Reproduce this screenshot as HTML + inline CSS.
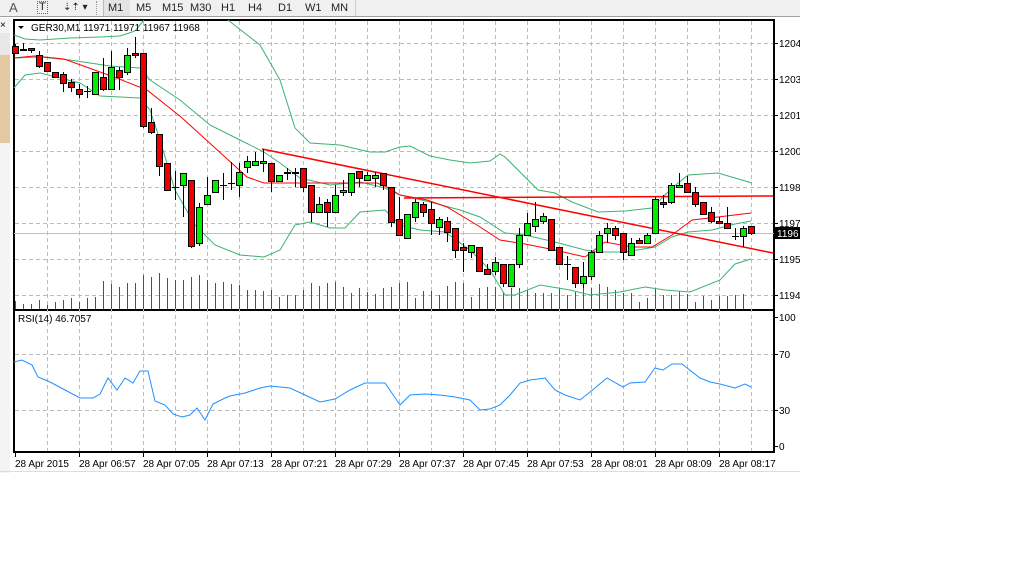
<!DOCTYPE html>
<html><head><meta charset="utf-8"><style>
body{margin:0;width:1010px;height:570px;background:#fff;overflow:hidden;font-family:"Liberation Sans",sans-serif;position:relative}
#tb{position:absolute;left:0;top:0;width:800px;height:16px;background:#f0f0f0;border-bottom:1px solid #a0a0a0}
#tb span{position:absolute;top:0;font-size:11px;color:#222;line-height:16px}
svg{position:absolute;left:0;top:0}
</style></head><body>
<div id="tb">
<span style="left:9px;font-size:13px;color:#555">A</span>
<span style="left:37px;border:1px dotted #666;line-height:11px;top:1px;padding:0 1px;font-size:11px">T</span>
<span style="left:63px;font-size:10px">⇣⇡ ▾</span>
<div style="position:absolute;left:96px;top:1px;width:2px;height:14px;border-left:1px dotted #999"></div>
<div style="position:absolute;left:103px;top:0;width:26px;height:16px;background:#e4e4e4;border-left:1px solid #bbb"></div>
<span style="left:108px">M1</span><span style="left:136px">M5</span><span style="left:162px">M15</span><span style="left:190px">M30</span><span style="left:221px">H1</span><span style="left:248px">H4</span><span style="left:278px">D1</span><span style="left:305px">W1</span><span style="left:331px">MN</span>
<div style="position:absolute;left:355px;top:0;width:1px;height:16px;background:#ccc"></div>
</div>
<div style="position:absolute;left:0;top:18px;width:10px;height:455px;background:#f4f4f4"></div>
<div style="position:absolute;left:0;top:33px;width:10px;height:22px;background:#e8e8e8"></div>
<div style="position:absolute;left:0;top:55px;width:10px;height:88px;background:#e3c9a0"></div>
<div style="position:absolute;left:0;top:20px;font-size:10px">×</div>
<svg width="1010" height="570" id="s" xmlns="http://www.w3.org/2000/svg" font-family="Liberation Sans, sans-serif" font-size="10">
<rect x="14" y="20" width="760" height="432" fill="#fff" stroke="#000" stroke-width="2"/>
<line x1="14" y1="310" x2="774" y2="310" stroke="#000" stroke-width="2"/>
<g id="grid" stroke="#bbb" stroke-dasharray="4,3" stroke-width="1"></g>
<line x1="14" y1="233.5" x2="774" y2="233.5" stroke="#c0c0c0"/>
<g id="vol" stroke="#0a8010" stroke-width="1"></g>
<g fill="none" stroke-width="1">
<polyline stroke="#3cb371" points="14,35 25,39 40,40 70,38 100,37 120,36 135,31 144,20"/>
<polyline stroke="#3cb371" points="228,20 260,45 280,80 295,128 310,143 340,145 370,152 385,152 400,147 410,146 430,156 450,160 470,163 490,161 500,154 505,157 538,190 555,193 572,202 598,212 625,211 652,208 672,188 688,175 718,173 752,183"/>
<polyline stroke="#3cb371" points="14,58 40,57 70,60 110,66 140,68 150,80 180,100 210,125 240,140 264,152 280,163 300,178 330,185 360,182 385,188 400,195 430,202 460,210 480,217 505,233 525,235 555,242 585,250 598,252 625,252 655,247 672,237 688,232 712,230 735,224 751,221"/>
<polyline stroke="#3cb371" points="14,88 25,75 40,73 80,83 100,96 140,98 150,110 160,140 175,190 195,225 215,245 240,255 264,257 280,250 295,225 310,222 330,228 345,228 360,212 385,210 400,225 420,230 445,232 470,250 490,270 505,295 515,295 540,285 570,290 590,295 620,292 645,287 665,290 690,292 720,280 735,264 751,259"/>
<polyline stroke="#f00" points="14,58 34,56 64,59 114,77 147,90 181,117 214,147 247,177 264,183 293,183 343,183 377,183 387,187 400,195 427,200 447,207 477,225 500,240 525,244 555,250 585,257 605,242 632,247 652,247 672,235 692,220 718,217 751,213"/>
<line x1="262" y1="149" x2="773" y2="253" stroke="#f00" stroke-width="1.5"/>
<line x1="404" y1="198" x2="773" y2="196" stroke="#f00" stroke-width="1.5"/>
</g>
<g id="cd"></g>
<rect x="775" y="227" width="25" height="12" fill="#000"/>
<text x="777" y="237" fill="#fff" font-size="10">1196</text>
<g id="ax" font-size="10" fill="#000"></g>
<text x="31" y="31" font-size="10">GER30,M1  11971 11971 11967 11968</text>
<path d="M18 26 L24 26 L21 29Z" fill="#000"/>
<text x="18" y="322" font-size="10">RSI(14) 46.7057</text>
<polyline fill="none" stroke="#1e90ff" points="14,362 22,360 32,365 38,377 50,382 65,390 80,398 93,398 100,394 108,378 117,390 125,378 133,383 140,371 148,371 155,401 165,405 173,414 182,417 190,415 197,408 205,420 213,404 225,398 230,396 245,393 260,388 270,386 290,388 305,395 320,402 335,399 350,390 365,383 385,383 400,405 410,395 425,394 440,395 455,397 470,400 480,410 490,409 500,405 510,395 520,383 530,380 545,378 555,390 565,395 580,400 590,392 607,378 623,387 630,383 645,382 655,368 663,370 672,364 682,364 700,378 710,382 720,384 735,388 745,384 751,387"/>
</svg>
<script>
var S='http://www.w3.org/2000/svg';function el(p,t,a){var e=document.createElementNS(S,t);for(var k in a)e.setAttribute(k,a[k]);document.getElementById(p).appendChild(e);return e}
for(var x=47;x<774;x+=32)el('grid','line',{x1:x+.5,y1:21,x2:x+.5,y2:451});
[43,79,115,151,187,223,259,295,354,410].forEach(function(y){el('grid','line',{x1:15,y1:y+.5,x2:773,y2:y+.5})});
var C=[[46,53,44,53],[50,49,43,50],[48,50,48,53],[55,66,51,68],[62,71,62,71],[72,77,72,77],[74,83,72,92],[82,87,79,92],[89,94,84,98],[91,91,86,98],[94,72,72,94],[77,89,58,91],[89,67,51,90],[70,77,67,90],[72,55,48,75],[53,55,37,58],[53,126,53,128],[122,132,108,134],[134,166,134,176],[163,190,163,190],[187,187,171,200],[185,173,173,217],[180,246,180,248],[243,207,203,246],[204,195,177,205],[192,180,180,192],[185,185,173,200],[183,183,162,190],[185,172,163,197],[167,161,156,173],[165,161,152,165],[163,161,149,172],[163,181,163,192],[181,175,175,181],[173,172,168,180],[173,172,168,187],[168,187,168,192],[185,212,185,222],[212,204,197,212],[202,212,199,227],[212,195,185,212],[192,190,180,196],[192,173,173,196],[171,178,171,187],[180,175,172,180],[178,175,172,187],[173,185,173,190],[187,222,187,227],[219,235,197,235],[238,214,214,238],[217,202,199,222],[204,212,202,217],[209,223,202,235],[227,219,217,235],[221,232,217,242],[228,250,228,258],[247,250,243,272],[252,245,245,258],[247,271,247,271],[269,274,264,274],[271,262,257,275],[264,283,264,287],[286,264,264,286],[264,235,228,268],[235,223,213,235],[226,219,202,232],[221,216,213,224],[219,250,219,250],[247,264,247,264],[264,264,256,280],[267,283,267,288],[283,276,262,288],[276,252,250,280],[252,235,231,252],[233,228,223,243],[228,235,226,240],[233,252,233,260],[255,243,238,255],[240,243,238,243],[243,235,233,243],[233,199,197,233],[202,204,195,208],[202,185,183,204],[187,185,173,187],[183,192,176,192],[192,204,187,207],[202,214,202,214],[212,221,207,223],[221,223,217,223],[223,228,207,228],[236,236,228,240],[236,228,226,247],[226,233,226,235]];
var V=[301,304,304,300,305,302,300,298,302,298,297,281,284,287,283,283,275,277,273,278,280,280,277,275,280,283,282,284,285,290,290,291,290,297,295,295,290,283,286,283,282,287,293,288,292,294,288,287,283,282,298,291,291,295,286,282,283,297,288,287,287,292,288,288,290,293,293,293,288,295,292,288,288,284,287,290,293,293,302,298,288,295,295,291,294,302,296,300,296,296,295,294];
V.forEach(function(v,i){var x=15+8*i+.5;el('vol','line',{x1:x,y1:v,x2:x,y2:309})});
C.forEach(function(c,i){var x=15+8*i,o=c[0],cl=c[1],h=Math.min(c[2],o,cl),l=Math.max(c[3],o,cl);
el('cd','line',{x1:x+.5,y1:h,x2:x+.5,y2:l,stroke:'#000'});
if(o==cl){el('cd','line',{x1:x-3,y1:o+.5,x2:x+4,y2:o+.5,stroke:'#000'});return}
var t=Math.min(o,cl),b=Math.max(o,cl);el('cd','rect',{x:x-2.5,y:t+.5,width:6,height:Math.max(b-t,1),fill:cl<o?'#00ee00':'#ee0000',stroke:'#000'})});
[[43,'1204'],[79,'1203'],[115,'1201'],[151,'1200'],[187,'1198'],[223,'1197'],[259,'1195'],[295,'1194'],[317,'100'],[354,'70'],[410,'30'],[446,'0']].forEach(function(a){el('ax','line',{x1:774,y1:a[0]+.5,x2:778,y2:a[0]+.5,stroke:'#000'});var t=el('ax','text',{x:779,y:a[0]+4});t.textContent=a[1]});
</script>
<svg width="1010" height="570" style="pointer-events:none" font-family="Liberation Sans, sans-serif" font-size="10">
<rect x="800" y="0" width="210" height="570" fill="#fff"/>
<g stroke="#000">
<line x1="15.5" y1="452" x2="15.5" y2="457"/><line x1="79.5" y1="452" x2="79.5" y2="457"/><line x1="143.5" y1="452" x2="143.5" y2="457"/><line x1="207.5" y1="452" x2="207.5" y2="457"/><line x1="271.5" y1="452" x2="271.5" y2="457"/><line x1="335.5" y1="452" x2="335.5" y2="457"/><line x1="399.5" y1="452" x2="399.5" y2="457"/><line x1="463.5" y1="452" x2="463.5" y2="457"/><line x1="527.5" y1="452" x2="527.5" y2="457"/><line x1="591.5" y1="452" x2="591.5" y2="457"/><line x1="655.5" y1="452" x2="655.5" y2="457"/><line x1="719.5" y1="452" x2="719.5" y2="457"/>
</g>
<g fill="#000">
<text x="15" y="467">28 Apr 2015</text><text x="79" y="467">28 Apr 06:57</text><text x="143" y="467">28 Apr 07:05</text><text x="207" y="467">28 Apr 07:13</text><text x="271" y="467">28 Apr 07:21</text><text x="335" y="467">28 Apr 07:29</text><text x="399" y="467">28 Apr 07:37</text><text x="463" y="467">28 Apr 07:45</text><text x="527" y="467">28 Apr 07:53</text><text x="591" y="467">28 Apr 08:01</text><text x="655" y="467">28 Apr 08:09</text><text x="719" y="467">28 Apr 08:17</text>
</g>
<line x1="0" y1="471.5" x2="800" y2="471.5" stroke="#ddd"/>
</svg>
</body></html>
